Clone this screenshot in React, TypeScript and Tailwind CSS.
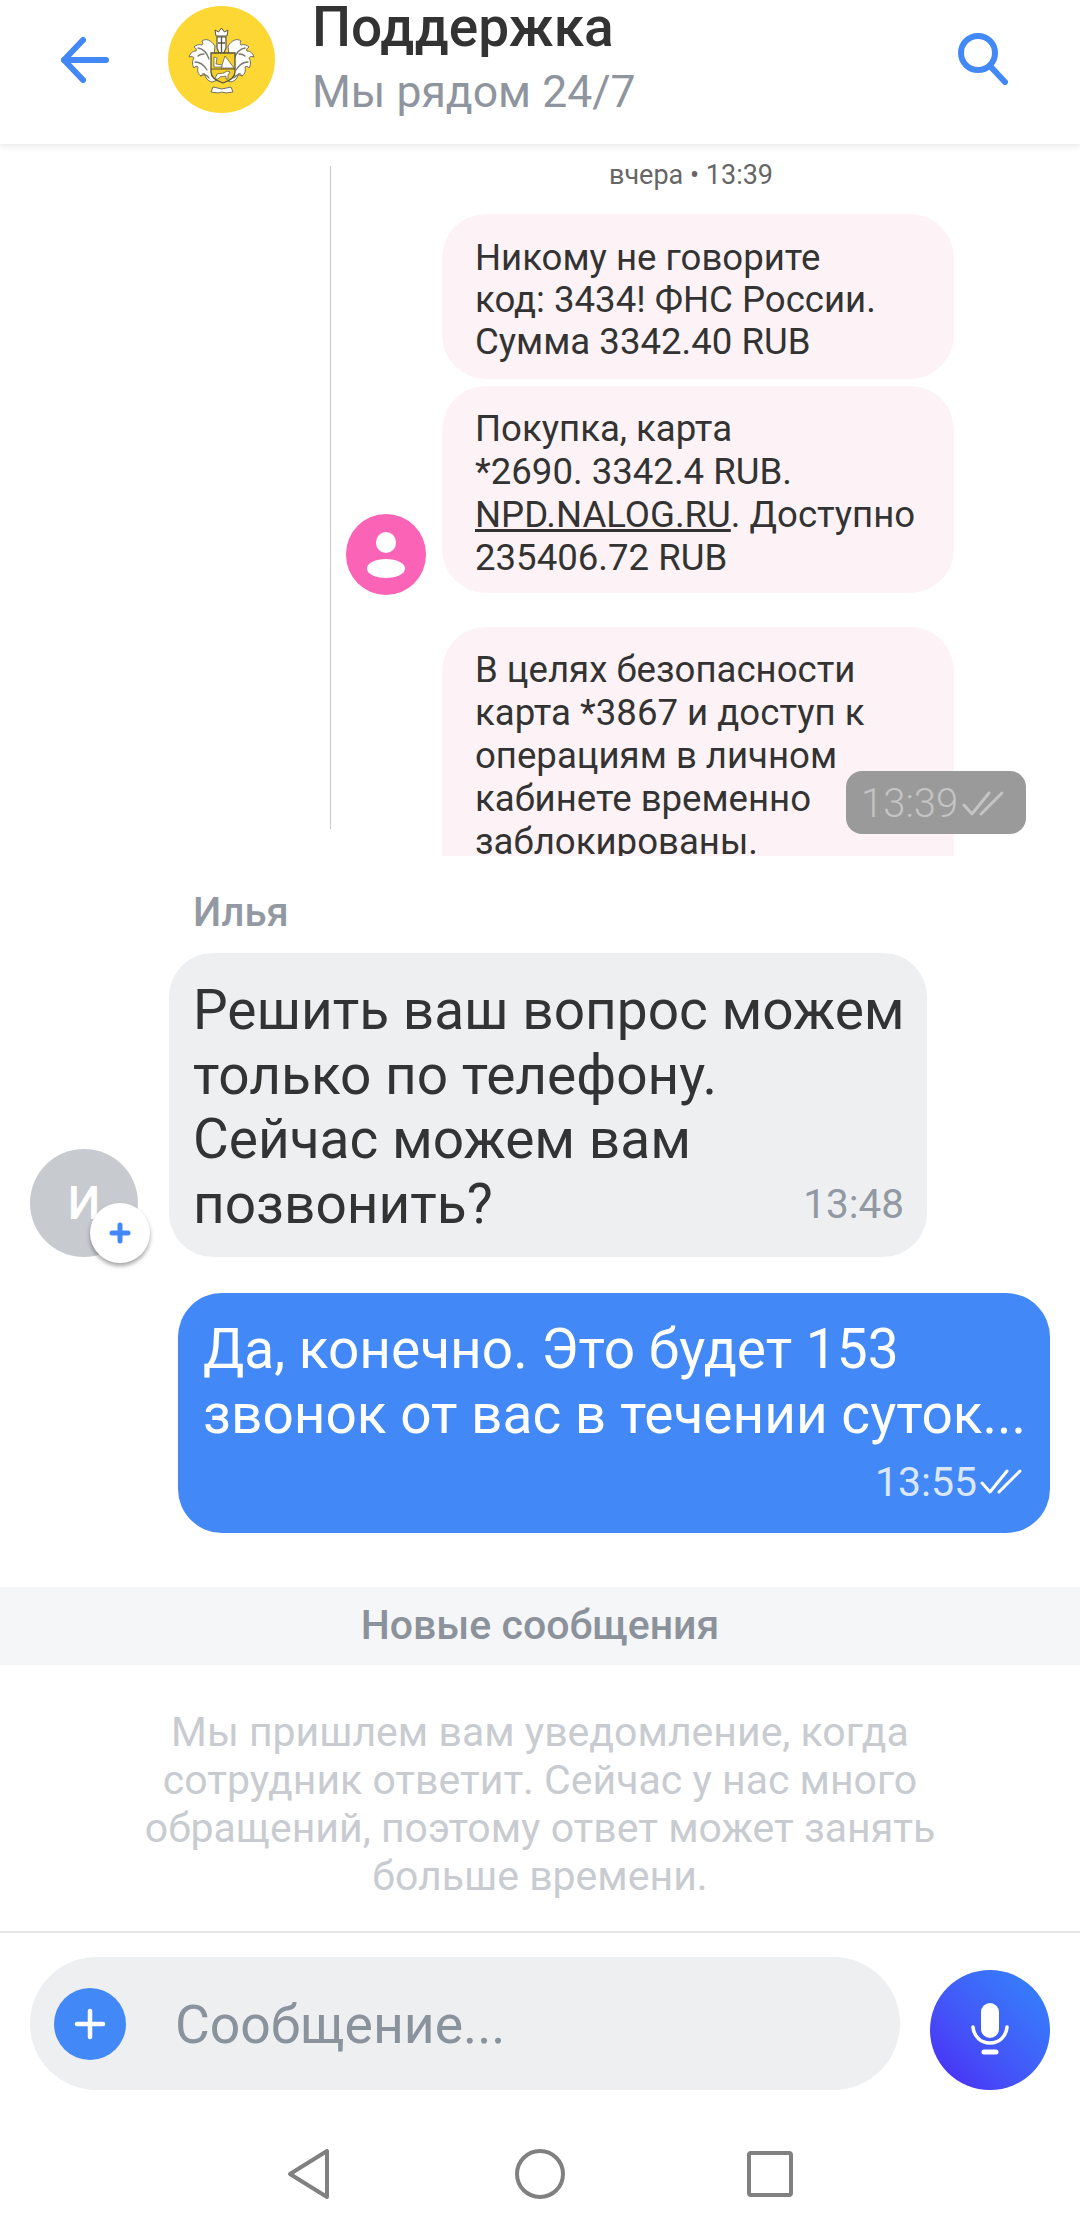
import React from 'react'

const roboto = { fontFamily: 'Roboto, "Noto Sans", sans-serif' }

function DoubleCheck({ className }: { className: string }) {
  return (
    <svg className={className} viewBox="0 0 44 30" fill="none" stroke="currentColor" strokeWidth="3" strokeLinecap="round" strokeLinejoin="round">
      <path d="M2 16l8 9L27 4" />
      <path d="M19 25L40 4" />
    </svg>
  )
}

function Logo() {
  return (
    <svg className="w-[107px] h-[107px] shrink-0" viewBox="0 0 107 107">
      <circle cx="53.5" cy="53.5" r="53.5" fill="#fdd835" />
      {/* foliage */}
      <g fill="#fff" stroke="#6e6e64" strokeWidth="1" strokeLinejoin="round">
        <path d="M47 40c-4-6-9-8-13-5 1 2 1 3 0 4-3-1-6 0-8 2 2 1 3 3 2 4-4 0-6 3-7 6 3-1 5 0 5 1-2 3-2 7 0 10 1-2 3-2 4-1-1 4 0 7 3 9 1-2 2-3 4-2 0 4 3 7 7 8l8-3-6-10V50z" />
        <path d="M60 40c4-6 9-8 13-5-1 2-1 3 0 4 3-1 6 0 8 2-2 1-3 3-2 4 4 0 6 3 7 6-3-1-5 0-5 1 2 3 2 7 0 10-1-2-3-2-4-1 1 4 0 7-3 9-1-2-2-3-4-2 0 4-3 7-7 8l-8-3 6-10V50z" />
        <path d="M45 81l9 2 9-2 2 5-7 1-4-1-4 1-7-1z" />
      </g>
      <g fill="none" stroke="#77776c" strokeWidth="1.300" strokeLinecap="round">
        <path d="M30 42c6 1 9 5 11 11M27 56c5 0 9 3 12 8M33 70c3-2 6-1 8 2M36 48c-3 0-5 1-6 2" />
        <path d="M77 42c-6 1-9 5-11 11M80 56c-5 0-9 3-12 8M74 70c-3-2-6-1-8 2M71 48c3 0 5 1 6 2" />
      </g>
      {/* helmet and crown */}
      <path d="M48 30l-1-6 3.500 2 3-4 3 4 3.500-2-1 6z" fill="#fff" stroke="#55554c" strokeWidth="1" />
      <path d="M49 31h9v11l-2 5h-5l-2-5z" fill="#fff" stroke="#55554c" strokeWidth="1.200" />
      <path d="M53.500 31v15M50 37h7" stroke="#55554c" strokeWidth="1.300" />
      {/* shield */}
      <path d="M43 47h24v19c0 6-6 9-12 11-6-2-12-5-12-11z" fill="#f4cf2a" stroke="#55523a" strokeWidth="1.300" />
      <path d="M43 63h24" stroke="#55523a" strokeWidth="1" />
      <path d="M53 62l4-12 9 12z" fill="#fff" stroke="#55523a" strokeWidth="0.700" />
      <path d="M46 51l3 1-1 6 6 1v2h-8z" fill="#fff" stroke="#55523a" strokeWidth="0.700" />
      <path d="M47 73l2-5 7-1 3-2 3 1-2 3v4h-2v-3l-6 1-2 2z" fill="#fff" stroke="#55523a" strokeWidth="0.700" />
    </svg>
  )
}

export default function App() {
  return (
    <div className="w-[1080px] h-[2235px] bg-white overflow-hidden flex flex-col text-[#333333]" style={roboto}>
      <header className="h-[144px] shrink-0 flex items-start bg-white shadow-[0_2px_8px_rgba(0,0,0,0.1)] relative z-10">
        <svg className="ml-[58px] mt-[33px] w-[54px] h-[54px] shrink-0" viewBox="0 0 54 54" fill="none" stroke="#4388f7" strokeWidth="6" strokeLinecap="round" strokeLinejoin="round">
          <path d="M6 27h42" />
          <path d="M25 7L6 27l19 20" />
        </svg>
        <div className="ml-[56px] mt-[6px]">
          <Logo />
        </div>
        <div className="ml-[37px] flex-1">
          <div className="text-[55px] leading-[54px] font-medium">Поддержка</div>
          <div className="text-[44.500px] leading-[50px] mt-[13px] text-[#8e959e]">Мы рядом 24/7</div>
        </div>
        <svg className="mr-[70px] mt-[31px] w-[54px] h-[54px] shrink-0" viewBox="0 0 54 54" fill="none" stroke="#4388f7" strokeWidth="6" strokeLinecap="round">
          <circle cx="22" cy="22" r="17" />
          <path d="M34 35l15 16" />
        </svg>
      </header>

      {/* пересланный скриншот */}
      <section className="h-[712px] shrink-0 flex pl-[330px] overflow-hidden">
        <div className="w-[1px] h-[663px] mt-[22px] bg-[#c9c9c9] shrink-0" />
        <div className="ml-[15px] w-[680px] relative">
          <div className="pl-[263px] pt-[17px] text-[27px] leading-[28px] text-[#666666]">вчера • 13:39</div>
          <div className="ml-[96px] mt-[25px] w-[512px] h-[165px] rounded-[44px] bg-[#fdf3f6] pl-[33px] pt-[23px] text-[36.600px] leading-[42px] text-[#333333] whitespace-nowrap">
            Никому не говорите<br />код: 3434! ФНС России.<br />Сумма 3342.40 RUB
          </div>
          <div className="mt-[7px] flex items-end">
            <div className="w-[80px] h-[81px] -mb-[2px] rounded-full bg-[#fb64b6] flex flex-col items-center justify-center shrink-0">
              <div className="w-[20px] h-[21px] rounded-full bg-white" />
              <div className="w-[38px] h-[19px] rounded-[50%] bg-white mt-[6px]" />
            </div>
            <div className="ml-[16px] w-[512px] h-[207px] rounded-[44px] bg-[#fdf3f6] pl-[33px] pt-[21px] text-[36.600px] leading-[43px] whitespace-nowrap">
              Покупка, карта<br />*2690. 3342.4 RUB.<br /><span className="underline">NPD.NALOG.RU</span>. Доступно<br />235406.72 RUB
            </div>
          </div>
          <div className="ml-[96px] mt-[34px] w-[512px] h-[229px] rounded-t-[44px] bg-[#fdf3f6] pl-[33px] pt-[21px] text-[36.600px] leading-[43px] whitespace-nowrap overflow-hidden">
            В целях безопасности<br />карта *3867 и доступ к<br />операциям в личном<br />кабинете временно<br />заблокированы.
          </div>
          <div className="absolute left-[500px] top-[627px] w-[180px] h-[63px] rounded-[16px] bg-[#9a9a9a] flex items-center pl-[15px] pt-[3px] text-[40px] text-[#c4c4c4] font-light">
            13:39
            <DoubleCheck className="w-[44px] h-[30px] ml-[4px] text-[#c4c4c4]" />
          </div>
        </div>
      </section>

      <div className="mt-[35px] ml-[193px] text-[40px] leading-[44px] font-medium text-[#9299a2]">Илья</div>
      <div className="mt-[18px] flex items-end pl-[30px]">
        <div className="w-[108px] h-[108px] rounded-full bg-[#c7cbd0] flex items-center justify-center text-white text-[46px] font-medium relative shrink-0">
          <span>И</span>
          <div className="absolute left-[60px] top-[54px] w-[60px] h-[60px] rounded-full bg-white shadow-[0_3px_4px_rgba(0,0,0,0.35)] flex items-center justify-center">
            <svg className="w-[22px] h-[22px]" viewBox="0 0 22 22" stroke="#4388f7" strokeWidth="5" strokeLinecap="round">
              <path d="M11 3v16M3 11h16" />
            </svg>
          </div>
        </div>
        <div className="ml-[31px] w-[758px] h-[304px] rounded-[44px] bg-[#edeff1] pl-[24px] pr-[23px] pt-[25px] text-[55px] leading-[64.500px] whitespace-nowrap">
          Решить ваш вопрос можем<br />только по телефону.<br />Сейчас можем вам
          <div className="flex justify-between items-center">
            <span>позвонить?</span>
            <span className="text-[40.500px] text-[#9299a2]">13:48</span>
          </div>
        </div>
      </div>

      <div className="mt-[36px] ml-[178px] w-[872px] h-[240px] rounded-[44px] bg-[#4388f7] text-white pl-[25px] pr-[26px] pt-[24px] text-[55px] leading-[65px] whitespace-nowrap">
        Да, конечно. Это будет 153<br />звонок от вас в течении суток...
        <div className="mt-[11px] flex justify-end items-center text-[41px] leading-[48px] text-[#dbe7fd]">
          13:55
          <DoubleCheck className="w-[44px] h-[30px] ml-[3px] text-white" />
        </div>
      </div>

      <div className="mt-[54px] h-[78px] shrink-0 bg-[#f5f6f8] flex items-center justify-center text-[41px] font-medium text-[#8b929b]">
        Новые сообщения
      </div>
      <div className="h-[266px] shrink-0 pt-[43px] text-center text-[41px] leading-[48px] text-[#c8ccd1]">
        Мы пришлем вам уведомление, когда<br />сотрудник ответит. Сейчас у нас много<br />обращений, поэтому ответ может занять<br />больше времени.
      </div>
      <div className="h-[2px] shrink-0 bg-[#e4e5e7]" />

      <div className="mt-[24px] pl-[30px] pr-[30px] flex items-end justify-between">
        <div className="w-[870px] h-[133px] rounded-full bg-[#edeff1] flex items-center pl-[24px]">
          <div className="w-[72px] h-[72px] rounded-full bg-[#4388f7] flex items-center justify-center shrink-0">
            <svg className="w-[34px] h-[34px]" viewBox="0 0 34 34" stroke="#fff" strokeWidth="4.500" strokeLinecap="round">
              <path d="M17 4v26M4 17h26" />
            </svg>
          </div>
          <span className="ml-[49px] mt-[3px] text-[53.500px] text-[#8a929b]">Сообщение...</span>
        </div>
        <div className="w-[120px] h-[120px] rounded-full bg-gradient-to-bl from-[#2f86fb] to-[#4b1ef5] flex items-center justify-center">
          <svg className="w-[40px] h-[54px] -mt-[3px]" viewBox="0 0 40 54" fill="none" stroke="#fff" strokeLinecap="round">
            <rect x="11" y="1" width="18" height="35" rx="9" fill="#fff" stroke="none" />
            <path d="M3 25c1 10 8 16 17 16s16-6 17-16" strokeWidth="3.500" />
            <path d="M14 50h12" strokeWidth="5" />
          </svg>
        </div>
      </div>

      <nav className="mt-[58px] flex justify-center gap-[180px]">
        <svg className="w-[50px] h-[52px]" viewBox="0 0 50 52" fill="none" stroke="#808080" strokeWidth="4" strokeLinejoin="round">
          <path d="M42 3v46L5 26z" />
        </svg>
        <svg className="w-[50px] h-[52px]" viewBox="0 0 50 52" fill="none" stroke="#808080" strokeWidth="4">
          <circle cx="25" cy="26" r="23" />
        </svg>
        <svg className="w-[50px] h-[52px]" viewBox="0 0 50 52" fill="none" stroke="#808080" strokeWidth="4" strokeLinejoin="round">
          <rect x="4" y="5" width="42" height="42" rx="2" />
        </svg>
      </nav>
    </div>
  )
}
